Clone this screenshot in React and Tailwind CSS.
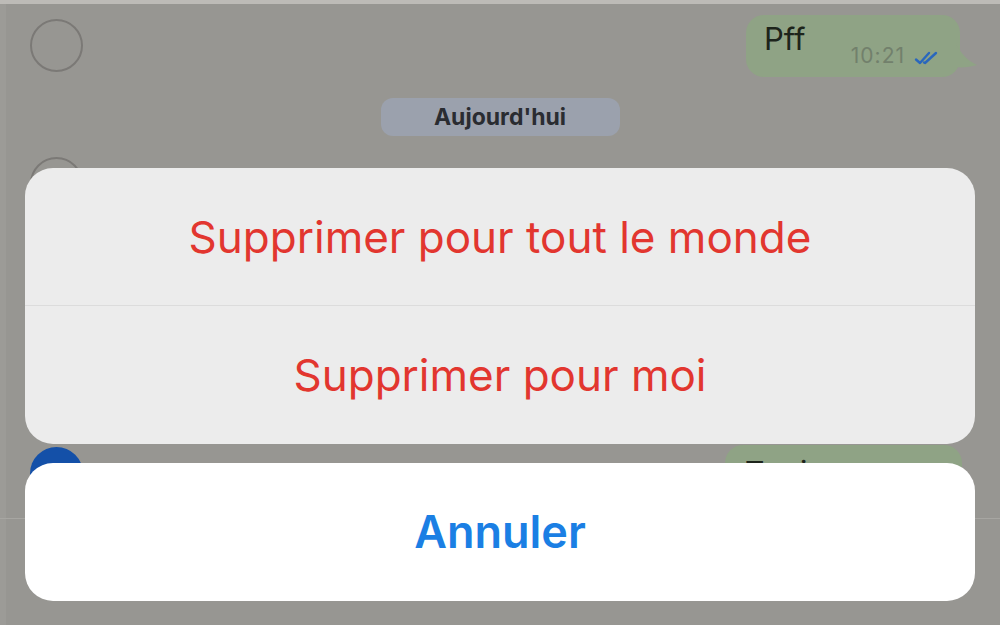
import React from "react";

function Checks() {
  return (
    <svg width="28" height="16" viewBox="0 0 28 16" fill="none" className="ml-[9px]">
      <path d="M2 9.5 L6 13 L15 3" stroke="#2a67bd" strokeWidth="2.4" strokeLinecap="round" strokeLinejoin="round" />
      <path d="M10 12.5 L11 13 L22 3" stroke="#2a67bd" strokeWidth="2.4" strokeLinecap="round" strokeLinejoin="round" />
    </svg>
  );
}

function Tail() {
  return (
    <svg width="22" height="26" viewBox="0 0 22 26" className="absolute right-[-18px] bottom-[8px]">
      <path d="M0 0 C4 10 12 18 21 22 C14 24 6 25 0 24 Z" fill="#8fa385" />
    </svg>
  );
}

export default function App() {
  return (
    <div className="relative w-[1000px] h-[625px] overflow-hidden bg-[#979692]" style={{ fontFamily: "Inter, 'Liberation Sans', sans-serif" }}>
      {/* chat behind */}
      <div className="flex flex-col h-full border-l-[6px] border-[#9c9b97]">
        <div className="h-[4px] bg-[#bdbbb7] -ml-[6px]" />
        <div className="flex items-start justify-between pt-[11px] pr-[40px]">
          <div className="ml-[24px] mt-[4px] w-[53px] h-[53px] rounded-full border-2 border-[#7b7976]" />
          <div className="relative flex items-end h-[62px] w-[214px] rounded-[18px] bg-[#8fa385] pl-[18px] pr-[18px] pb-[11px]">
            <span className="text-[31px] leading-none text-[#1d241b] mb-[12px]">Pff</span>
            <span className="ml-auto text-[21px] leading-none text-[#72806c] tracking-[1px]">10:21</span>
            <Checks />
            <Tail />
          </div>
        </div>
        <div className="flex justify-center mt-[21px] -ml-[6px]">
          <div className="w-[239px] h-[38px] rounded-[12px] bg-[#9ba1ad] flex items-center justify-center text-[23px] font-bold text-[#2a2c31]">
            Aujourd'hui
          </div>
        </div>
        <div className="ml-[24px] mt-[21px] w-[53px] h-[53px] rounded-full border-2 border-[#7b7976]" />
        <div className="flex-1" />
        <div className="h-[56px] flex items-start justify-between pr-[38px]">
          <div className="ml-[24px] mt-[2px] w-[53px] h-[53px] rounded-full bg-[#1450a8]" />
          <div className="shrink-0 w-[237px] h-[70px] rounded-[18px] bg-[#8fa385] pl-[20px] pt-[12px] text-[30px] leading-none text-[#1d241b]">
            Tu ris.
          </div>
        </div>
        <div className="h-[1px] bg-[#a7a6a2] mt-[17px] -ml-[6px]" />
        <div className="h-[106px]" />
      </div>

      {/* action sheet overlay */}
      <div className="absolute inset-0 flex flex-col justify-end px-[25px] pb-[24px] gap-[19px]">
        <div className="rounded-[28px] bg-[#ececec] overflow-hidden flex flex-col">
          <div className="h-[137px] flex items-center justify-center text-[44px] text-[#e2362f]">
            Supprimer pour tout le monde
          </div>
          <div className="h-[1px] bg-[#dcdcdc]" />
          <div className="h-[138px] flex items-center justify-center text-[44px] text-[#e2362f]">
            Supprimer pour moi
          </div>
        </div>
        <div className="h-[138px] rounded-[28px] bg-white flex items-center justify-center text-[45px] font-semibold text-[#1b7fe4]">
          Annuler
        </div>
      </div>
    </div>
  );
}
